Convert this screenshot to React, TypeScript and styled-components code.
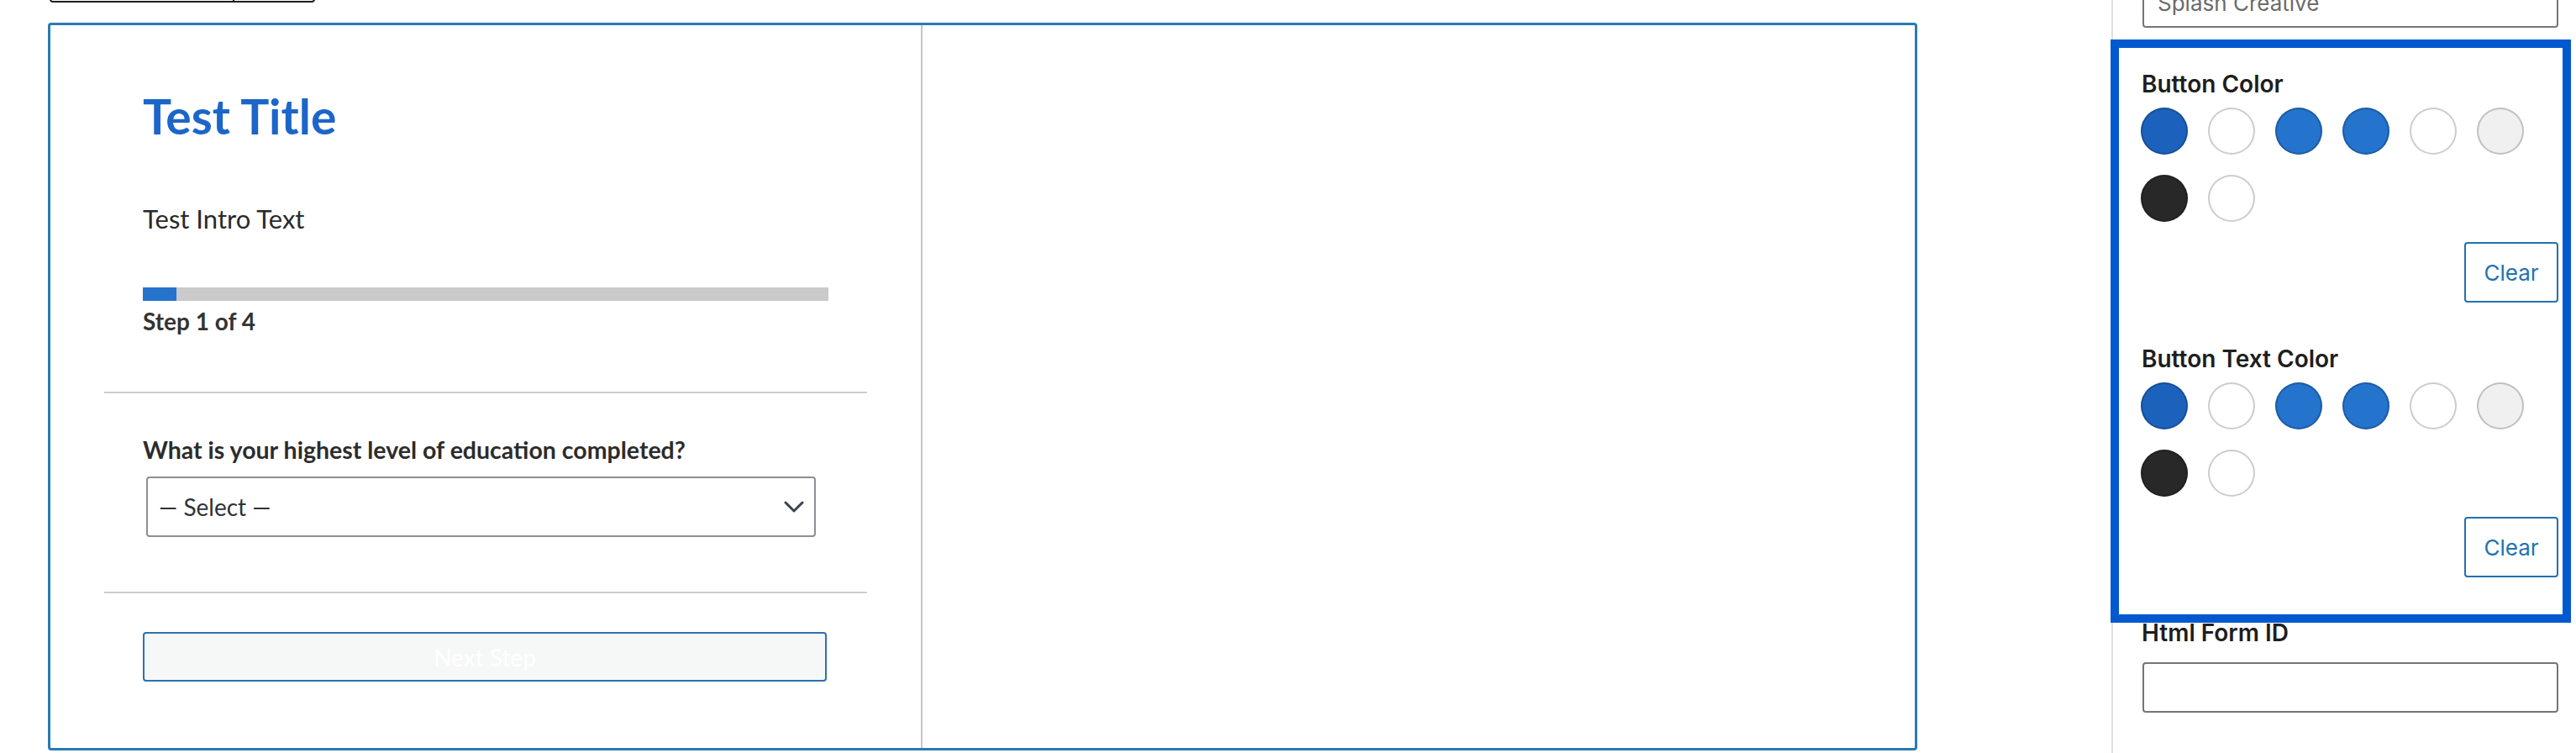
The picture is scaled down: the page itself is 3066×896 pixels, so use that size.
import React from "react";
import styled, { createGlobalStyle } from "styled-components";

const GlobalStyle = createGlobalStyle`
  html, body { margin: 0; padding: 0; background: #ffffff; overflow: hidden; }
  body { font-family: "Lato", "Liberation Sans", sans-serif; }
  #root { width: 3066px; height: 896px; overflow: hidden; }
  * { box-sizing: border-box; }
`;

const Page = styled.div`
  display: flex;
  width: 3066px;
  height: 896px;
  overflow: hidden;
  background: #fff;
`;

const Canvas = styled.main`
  flex: 0 0 2513px;
  display: flex;
  flex-direction: column;
  padding-left: 57px;
`;

const Toolbar = styled.div`
  display: flex;
  flex: 0 0 43px;
  width: 316px;
  height: 43px;
  margin: -40px 0 0 2px;
  border: 2px solid #1e1e1e;
  border-radius: 4px;
  background: #fff;
`;

const ToolbarSegment = styled.div<{ $w: number }>`
  width: ${(p) => p.$w}px;
  height: 100%;
  & + & { border-left: 2px solid #1e1e1e; }
`;

const Card = styled.section`
  margin-top: 24px;
  width: 2225px;
  flex: 0 0 866px;
  height: 866px;
  border: 3px solid #2a7ab2;
  border-radius: 4px;
  display: flex;
  background: #fff;
  overflow: hidden;
`;

const LeftColumn = styled.div`
  flex: 0 0 1038px;
  border-right: 2px solid #c6c6c6;
  padding: 0 64px;
  display: flex;
  flex-direction: column;
`;

const RightColumn = styled.div`
  flex: 1;
`;

const Section = styled.div<{ $top: number }>`
  padding: 0 46px;
  margin-top: ${(p) => p.$top}px;
  display: flex;
  flex-direction: column;
`;

const Title = styled.h1`
  margin: 0;
  font-family: "Lato", sans-serif;
  font-weight: 700;
  font-size: 57px;
  line-height: 66px;
  color: #1c66c9;
`;

const Intro = styled.p`
  margin: 66px 0 0;
  font-size: 31px;
  line-height: 46px;
  color: #2a2a2a;
`;

const ProgressTrack = styled.div`
  margin-top: 59px;
  height: 16px;
  background: #cacaca;
`;

const ProgressFill = styled.div`
  height: 100%;
  background: #2673cc;
`;

const StepText = styled.div`
  margin-top: 7px;
  font-weight: 700;
  font-size: 28px;
  line-height: 34px;
  color: #333;
`;

const Divider = styled.hr<{ $top: number }>`
  margin: ${(p) => p.$top}px 0 0;
  border: none;
  height: 2px;
  background: #cccccc;
`;

const Question = styled.label`
  font-weight: 700;
  font-size: 28.5px;
  line-height: 36px;
  color: #2c2c2c;
`;

const SelectBox = styled.div`
  margin: 14px 0 0 4px;
  width: 797px;
  height: 72px;
  border: 2px solid #8c8f94;
  border-radius: 4px;
  display: flex;
  align-items: center;
  justify-content: space-between;
  padding: 0 12px 0 13px;
  font-size: 28px;
  color: #2c3338;
`;

const NextButton = styled.button`
  margin-top: 46px;
  width: 814px;
  height: 59px;
  border: 2px solid #2c72b0;
  border-radius: 4px;
  background: #f6f7f7;
  color: #ffffff;
  font-family: "Lato", sans-serif;
  font-size: 28px;
  font-weight: 400;
  display: flex;
  align-items: center;
  justify-content: center;
  padding: 0;
`;

const Sidebar = styled.aside`
  flex: 1;
  border-left: 2px solid #e0e0e0;
  display: flex;
  flex-direction: column;
  font-family: "Inter", "Liberation Sans", sans-serif;
`;

const TextInput = styled.div<{ $top: number }>`
  margin: ${(p) => p.$top}px 0 0 35px;
  flex: 0 0 60px;
  width: 495px;
  height: 60px;
  border: 2px solid #757575;
  border-radius: 4px;
  display: flex;
  align-items: center;
  padding: 0 16px;
  font-size: 26px;
  color: #6b6b6b;
`;

const HighlightPanel = styled.div`
  margin: 14px 0 0 -3px;
  width: 548px;
  border: 10px solid #0259cf;
  padding: 26px 5px 44px 27px;
  display: flex;
  flex-direction: column;
  background: #fff;
`;

const PanelHeading = styled.div<{ $top?: number }>`
  margin-top: ${(p) => p.$top ?? 0}px;
  font-weight: 600;
  font-size: 28px;
  line-height: 34px;
  color: #1e1e1e;
`;

const SwatchGrid = styled.div`
  margin-top: 11px;
  display: grid;
  grid-template-columns: repeat(6, 56px);
  gap: 24px;
  margin-left: -1px;
`;

const Swatch = styled.div<{ $color: string }>`
  width: 56px;
  height: 56px;
  border-radius: 50%;
  background: ${(p) => p.$color};
  box-shadow: inset 0 0 0 2px rgba(0, 0, 0, 0.2);
`;

const ClearRow = styled.div`
  margin-top: 24px;
  display: flex;
  justify-content: flex-end;
`;

const ClearButton = styled.button`
  width: 112px;
  height: 72px;
  border: 2px solid #2271b1;
  border-radius: 4px;
  background: #fff;
  color: #2271b1;
  font-family: "Inter", sans-serif;
  font-size: 26px;
  padding: 0;
`;

const FieldLabel = styled.div`
  margin: -5px 0 0 34px;
  font-weight: 600;
  font-size: 28px;
  line-height: 34px;
  color: #1e1e1e;
`;

const swatches = ["#1c62bd", "#ffffff", "#2473cc", "#2473cc", "#ffffff", "#f0f0f0", "#282828", "#ffffff"];

const Chevron = () => (
  <svg width="24" height="14" viewBox="0 0 24 14" fill="none">
    <polyline points="2,2 12,12 22,2" stroke="#3c434a" strokeWidth="3" strokeLinecap="round" strokeLinejoin="round" />
  </svg>
);

const ColorSetting = ({ label, top }: { label: string; top?: number }) => (
  <>
    <PanelHeading $top={top}>{label}</PanelHeading>
    <SwatchGrid>
      {swatches.map((c, i) => (
        <Swatch key={i} $color={c} />
      ))}
    </SwatchGrid>
    <ClearRow>
      <ClearButton>Clear</ClearButton>
    </ClearRow>
  </>
);

export default function App() {
  return (
    <>
      <GlobalStyle />
      <Page>
        <Canvas>
          <Toolbar>
            <ToolbarSegment $w={216} />
            <ToolbarSegment $w={96} />
          </Toolbar>
          <Card>
            <LeftColumn>
              <Section $top={75}>
                <Title>Test Title</Title>
                <Intro>Test Intro Text</Intro>
                <ProgressTrack>
                  <ProgressFill style={{ width: "40px" }} />
                </ProgressTrack>
                <StepText>Step 1 of 4</StepText>
              </Section>
              <Divider $top={67} />
              <Section $top={49}>
                <Question>What is your highest level of education completed?</Question>
                <SelectBox>
                  <span>— Select —</span>
                  <Chevron />
                </SelectBox>
              </Section>
              <Divider $top={65} />
              <Section $top={0}>
                <NextButton>Next Step</NextButton>
              </Section>
            </LeftColumn>
            <RightColumn />
          </Card>
        </Canvas>
        <Sidebar>
          <TextInput $top={-27}>Splash Creative</TextInput>
          <HighlightPanel>
            <ColorSetting label="Button Color" />
            <ColorSetting label="Button Text Color" top={50} />
          </HighlightPanel>
          <FieldLabel>Html Form ID</FieldLabel>
          <TextInput $top={18} />
        </Sidebar>
      </Page>
    </>
  );
}
